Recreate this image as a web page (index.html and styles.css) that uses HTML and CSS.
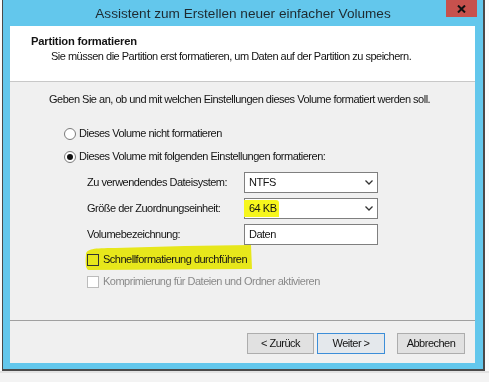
FILE: index.html
```html
<!DOCTYPE html>
<html lang="de">
<head>
<meta charset="utf-8">
<title>Assistent zum Erstellen neuer einfacher Volumes</title>
<link rel="stylesheet" href="styles.css">
</head>
<body>
<div class="screen">
  <div class="window">
    <div class="titlebar">
      <span class="spacer"></span>
      <span class="title">Assistent zum Erstellen neuer einfacher Volumes</span>
      <span class="close"><svg width="9" height="8" viewBox="0 0 9 8"><path d="M1 0.5 L8 7.5 M8 0.5 L1 7.5" stroke="#111" stroke-width="2"/></svg></span>
    </div>
    <div class="client">
      <div class="header">
        <div class="h-title">Partition formatieren</div>
        <div class="h-sub">Sie müssen die Partition erst formatieren, um Daten auf der Partition zu speichern.</div>
      </div>
      <div class="body">
        <p class="intro">Geben Sie an, ob und mit welchen Einstellungen dieses Volume formatiert werden soll.</p>
        <div class="options">
          <div class="radio r1"><span class="rb"></span><span>Dieses Volume nicht formatieren</span></div>
          <div class="radio r2"><span class="rb on"></span><span>Dieses Volume mit folgenden Einstellungen formatieren:</span></div>
          <div class="form">
            <span class="lbl">Zu verwendendes Dateisystem:</span>
            <div class="field select"><span>NTFS</span><svg class="chev" width="8" height="5" viewBox="0 0 8 5"><path d="M0.5 0.5 L4 4 L7.5 0.5" fill="none" stroke="#333" stroke-width="1.3"/></svg></div>
            <span class="lbl">Größe der Zuordnungseinheit:</span>
            <div class="field select"><span class="mark">64 KB</span><svg class="chev" width="8" height="5" viewBox="0 0 8 5"><path d="M0.5 0.5 L4 4 L7.5 0.5" fill="none" stroke="#333" stroke-width="1.3"/></svg></div>
            <span class="lbl">Volumebezeichnung:</span>
            <div class="field"><span>Daten</span></div>
          </div>
          <div class="check c1">
            <svg class="hl" width="168" height="26" viewBox="0 0 168 26"><path d="M1 9 C2 4 8 3 30 3 L100 1 L166 0 L167 24 L4 25 C1 25 0 20 1 9 Z" fill="#f6f61c"/></svg>
            <span class="cb"></span><span class="ct">Schnellformatierung durchführen</span>
          </div>
          <div class="check c2 disabled"><span class="cb"></span><span class="ct">Komprimierung für Dateien und Ordner aktivieren</span></div>
        </div>
      </div>
      <div class="footer">
        <button class="btn back">&lt; Zurück</button>
        <button class="btn next">Weiter &gt;</button>
        <button class="btn cancel">Abbrechen</button>
      </div>
    </div>
  </div>
  <div class="below"></div>
</div>
</body>
</html>
```
FILE: styles.css
```css
* { box-sizing: border-box; margin: 0; padding: 0; }
html, body { width: 489px; height: 382px; overflow: hidden; background: #fbfbfb; }
body {
  font-family: "Liberation Sans", Arial, sans-serif;
  font-size: 11px;
  letter-spacing: -0.5px;
  color: #141414;
  line-height: 15px;
  white-space: nowrap;
}

.screen { width: 489px; height: 382px; display: flex; flex-direction: column; }

.window {
  margin-left: 2px;
  width: 483px;
  height: 371px;
  flex: none;
  background: #63c7ec;
  border-left: 1px solid #4a4a4a;
  border-right: 2px solid #4a4a4a;
  border-bottom: 2px solid #4a4a4a;
  display: flex;
  flex-direction: column;
}

.titlebar {
  height: 26px;
  flex: none;
  display: grid;
  grid-template-columns: 1fr auto 1fr;
  align-items: center;
}
.title {
  font-size: 13.6px;
  letter-spacing: 0;
  color: #1e2a30;
  padding-top: 1px;
}
.close {
  justify-self: end;
  align-self: start;
  margin-right: 6px;
  width: 31px;
  height: 17px;
  background: #c7514d;
  display: flex;
  align-items: center;
  justify-content: center;
}

.client {
  margin: 0 8px 0 7px;
  height: 337px;
  background: #f0f0f0;
  display: flex;
  flex-direction: column;
}

.header {
  height: 56px;
  flex: none;
  background: #fff;
  border-bottom: 1px solid #c8c8c8;
  padding: 8px 0 0 21px;
}
.h-title { font-weight: bold; font-size: 11.2px; letter-spacing: -0.2px; }
.h-sub { padding-left: 20px; }

.body {
  height: 238px;
  flex: none;
  padding: 10px 0 0 39px;
}
.options { margin-left: 15px; display: flex; flex-direction: column; }

.radio { display: flex; align-items: center; gap: 3px; height: 15px; }
.r1 { margin-top: 19px; }
.r2 { margin-top: 8px; }
.rb {
  width: 12px; height: 12px;
  border: 1px solid #7a7a7a;
  border-radius: 50%;
  background: #fff;
  display: flex; align-items: center; justify-content: center;
}
.rb.on::after { content: ""; width: 6px; height: 6px; border-radius: 50%; background: #111; }

.form {
  margin-top: 8px;
  margin-left: 23px;
  display: grid;
  grid-template-columns: 157px 134px;
  grid-auto-rows: 21px;
  row-gap: 5px;
  align-items: center;
}
.field {
  height: 21px;
  border: 1px solid #7f7f7f;
  background: #fff;
  display: flex;
  align-items: center;
  justify-content: space-between;
  padding: 0 4px 0 4px;
}
.mark { background: #f6f61c; margin-left: -5px; padding: 1px 3px 1px 5px; border-radius: 0 3px 0 0; }
.chev { flex: none; }

.check { position: relative; display: flex; align-items: center; gap: 4px; height: 15px; margin-left: 23px; }
.c1 { margin-top: 7px; }
.c2 { margin-top: 7px; }
.cb { width: 12px; height: 12px; border: 1px solid #333; background: transparent; position: relative; }
.ct { position: relative; }
.hl { position: absolute; left: -2px; top: -7px; mix-blend-mode: multiply; }
.disabled { color: #8a8a8a; }
.disabled .cb { border-color: #bcbcbc; background: #fff; }

.footer {
  flex: 1;
  border-top: 1px solid #a0a0a0;
  display: flex;
  justify-content: flex-end;
  align-items: flex-start;
  padding: 12px 10px 0 0;
}
.btn {
  height: 21px;
  font: inherit;
  letter-spacing: inherit;
  color: #141414;
  background: #e1e1e1;
  border: 1px solid #adadad;
}
.back { width: 67px; }
.next { width: 68px; margin-left: 3px; border-color: #3d8ed8; background: #e4e8ec; }
.cancel { width: 68px; margin-left: 12px; }

.below { flex: 1; border-top: 2px solid #e2e2e2; background: #f3f3f3; }
```
